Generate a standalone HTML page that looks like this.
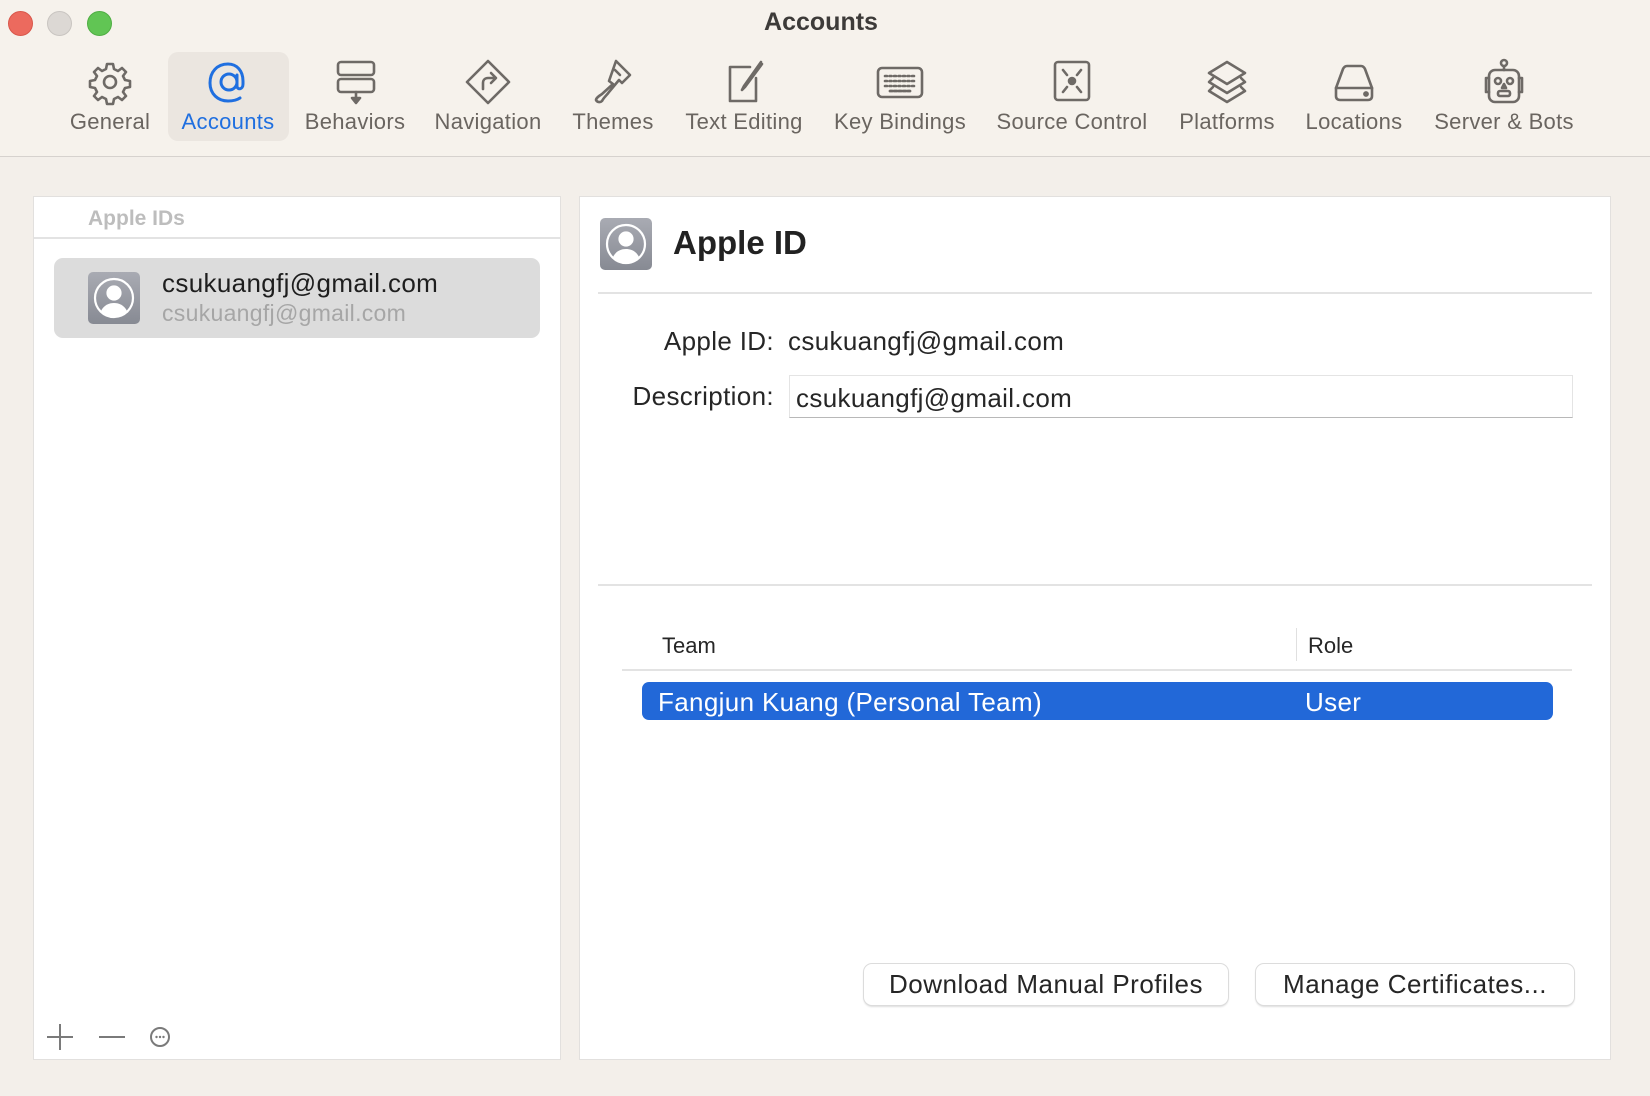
<!DOCTYPE html>
<html><head><meta charset="utf-8"><style>
*{margin:0;padding:0;box-sizing:border-box}
body{width:1650px;height:1096px;background:#f3efea;font-family:"Liberation Sans",sans-serif;position:relative;overflow:hidden;color:#262626}
.a{position:absolute}
.tb{left:0;top:0;width:1650px;height:157px;background:#f6f2ec;border-bottom:1.5px solid #d6d2ce}
.dot{width:25px;height:25px;border-radius:50%;top:11px}
.lab{top:109px;font-size:22px;letter-spacing:0.3px;color:#6a6560;white-space:nowrap;transform:translateX(-50%)}
.ic{top:58px;width:48px;height:48px;transform:translateX(-50%)}
.ic svg{width:48px;height:48px;fill:none;stroke:#6e6a66;stroke-width:2.6;stroke-linecap:round;stroke-linejoin:round}
.panel{background:#fff;border:1.5px solid #e2e0de}
.t25{font-size:26px;letter-spacing:0.35px;white-space:nowrap}
.btn{background:#fff;border-radius:8px;box-shadow:0 0 0 1px #dcdcdc,0 1.5px 2px rgba(0,0,0,.2);font-size:26px;letter-spacing:0.5px;text-align:center;line-height:41px;color:#262626;white-space:nowrap}
</style></head><body>
<div class="a tb"></div>
<div class="a dot" style="left:8px;background:#ec6a5e;border:1px solid #d9574b"></div>
<div class="a dot" style="left:47px;background:#dcd8d4;border:1px solid #c9c5c1"></div>
<div class="a dot" style="left:87px;background:#61c554;border:1px solid #4fae43"></div>
<div class="a" style="left:0;width:1642px;top:8px;text-align:center;font-size:25px;font-weight:bold;color:#3d3b39">Accounts</div>

<div class="a" style="left:168px;top:52px;width:121px;height:89px;background:#ebe6e0;border-radius:10px"></div>

<div class="a ic" style="left:110px"><svg viewBox="0 0 48 48"><path d="M21 6h6l1 5 4 2 4-3 4 4-3 4 2 4 5 1v6l-5 1-2 4 3 4-4 4-4-3-4 2-1 5h-6l-1-5-4-2-4 3-4-4 3-4-2-4-5-1v-6l5-1 2-4-3-4 4-4 4 3 4-2z"/><circle cx="24" cy="24" r="6"/></svg></div>
<div class="a lab" style="left:110px">General</div>

<div class="a ic" style="left:228px"><svg viewBox="0 0 48 48" style="stroke:#1f6fe0;stroke-width:3"><circle cx="25" cy="24" r="8"/><path d="M33 17v11c0 4 6 4 6-2v-3C39 13 33 6 24 6 13 6 6 14 6 25s8 18 18 18c5 0 9-1 12-3"/></svg></div>
<div class="a lab" style="left:228px;color:#1f6fe0">Accounts</div>

<div class="a ic" style="left:355px"><svg viewBox="0 0 48 48"><rect x="7" y="4" width="36" height="13" rx="3"/><rect x="7" y="21" width="36" height="13" rx="3"/><path d="M25 34v8"/><path d="M21 40l4 5 4-5z" fill="#6e6a66"/></svg></div>
<div class="a lab" style="left:355px">Behaviors</div>

<div class="a ic" style="left:488px"><svg viewBox="0 0 48 48"><path d="M24 3l21 21-21 21L3 24z"/><path d="M19 31v-6c0-3 2-5 5-5h7M27 15l5 5-5 5"/></svg></div>
<div class="a lab" style="left:488px">Navigation</div>

<div class="a ic" style="left:613px"><svg viewBox="0 0 48 48"><path d="M27 3l14 14-8 8-3-3-10 12c-2 3-5 5-7 9-2 2-5 1-6-1 0-2 3-4 6-6l11-10-4-3z"/><path d="M31 17l-5-5"/></svg></div>
<div class="a lab" style="left:613px">Themes</div>

<div class="a ic" style="left:744px"><svg viewBox="0 0 48 48"><path d="M30 9H10v34h26V20"/><path d="M41 4L24 28l-2 4 3-3L42 6"/></svg></div>
<div class="a lab" style="left:744px">Text Editing</div>

<div class="a ic" style="left:900px"><svg viewBox="0 0 48 48"><rect x="2" y="10" width="44" height="29" rx="4"/><path d="M9 18h30M9 23h30M9 28h30M14 33h20" stroke-dasharray="2 2.5"/><path d="M14 33h20"/></svg></div>
<div class="a lab" style="left:900px">Key Bindings</div>

<div class="a ic" style="left:1072px"><svg viewBox="0 0 48 48"><rect x="7" y="4" width="34" height="38" rx="3"/><circle cx="24" cy="23" r="3" fill="#6e6a66"/><path d="M15 12l4 5M33 12l-4 5M15 34l4-5M33 34l-4-5"/></svg></div>
<div class="a lab" style="left:1072px">Source Control</div>

<div class="a ic" style="left:1227px"><svg viewBox="0 0 48 48"><path d="M24 4l18 11-18 11L6 15z"/><path d="M10 20l-4 4 18 11 18-11-4-4"/><path d="M10 29l-4 4 18 11 18-11-4-4"/></svg></div>
<div class="a lab" style="left:1227px">Platforms</div>

<div class="a ic" style="left:1354px"><svg viewBox="0 0 48 48"><path d="M6 30L13 11c1-2 2-3 4-3h14c2 0 3 1 4 3l7 19v8c0 3-2 4-4 4H10c-2 0-4-1-4-4z"/><path d="M6 30h36"/><circle cx="36" cy="36" r="1.6" fill="#6e6a66"/></svg></div>
<div class="a lab" style="left:1354px">Locations</div>

<div class="a ic" style="left:1504px"><svg viewBox="0 0 48 48"><circle cx="24" cy="5" r="3"/><path d="M24 8v4"/><rect x="9" y="12" width="30" height="32" rx="6"/><path d="M9 20H6v14h3M39 20h3v14h-3"/><circle cx="18" cy="23" r="3"/><circle cx="30" cy="23" r="3"/><path d="M24 26l-2 4h4z"/><rect x="18" y="33" width="12" height="5" rx="2"/></svg></div>
<div class="a lab" style="left:1504px">Server &amp; Bots</div>

<!-- left panel -->
<div class="a panel" style="left:33px;top:196px;width:528px;height:864px"></div>
<div class="a" style="left:88px;top:207px;font-size:21px;font-weight:bold;color:#bdbdbd">Apple IDs</div>
<div class="a" style="left:34px;top:237px;width:526px;height:1.5px;background:#e3e3e3"></div>
<div class="a" style="left:54px;top:258px;width:486px;height:80px;background:#dcdcdc;border-radius:9px"></div>
<div class="a" style="left:88px;top:272px;width:52px;height:52px;border-radius:5px;background:linear-gradient(#a9abb3,#878a93)">
<svg width="52" height="52" viewBox="0 0 52 52" style="fill:none;stroke:#fff;stroke-width:2.2"><circle cx="26" cy="26" r="19"/><circle cx="26" cy="21" r="6.5" fill="#fff"/><path d="M13 39c3-6 8-8 13-8s10 2 13 8c-3 3-8 6-13 6s-10-3-13-6z" fill="#fff" stroke="none"/></svg></div>
<div class="a t25" style="left:162px;top:268px;color:#1e1e1e">csukuangfj@gmail.com</div>
<div class="a" style="left:162px;top:300px;font-size:23px;letter-spacing:0.3px;color:#a6a6a6">csukuangfj@gmail.com</div>
<svg class="a" style="left:44px;top:1022px" width="140" height="30" viewBox="0 0 140 30"><g stroke="#7a7a7a" stroke-width="2" fill="none"><path d="M16 2v26M3 15h26"/><path d="M55 15h26"/><circle cx="116" cy="15" r="9"/></g><g fill="#7a7a7a"><circle cx="112.5" cy="15" r="1.2"/><circle cx="116" cy="15" r="1.2"/><circle cx="119.5" cy="15" r="1.2"/></g></svg>

<!-- right panel -->
<div class="a panel" style="left:579px;top:196px;width:1032px;height:864px"></div>
<div class="a" style="left:600px;top:218px;width:52px;height:52px;border-radius:5px;background:linear-gradient(#a9abb3,#878a93)">
<svg width="52" height="52" viewBox="0 0 52 52" style="fill:none;stroke:#fff;stroke-width:2.2"><circle cx="26" cy="26" r="19"/><circle cx="26" cy="21" r="6.5" fill="#fff"/><path d="M13 39c3-6 8-8 13-8s10 2 13 8c-3 3-8 6-13 6s-10-3-13-6z" fill="#fff" stroke="none"/></svg></div>
<div class="a" style="left:673px;top:224px;font-size:33px;font-weight:bold;color:#222">Apple ID</div>
<div class="a" style="left:598px;top:292px;width:994px;height:1.5px;background:#e3e3e3"></div>
<div class="a t25" style="left:540px;width:234px;text-align:right;top:326px">Apple ID:</div>
<div class="a t25" style="left:788px;top:326px">csukuangfj@gmail.com</div>
<div class="a t25" style="left:540px;width:234px;text-align:right;top:381px">Description:</div>
<div class="a" style="left:789px;top:375px;width:784px;height:43px;border:1px solid #e4e4e4;border-bottom:1.5px solid #b8b8b8"></div>
<div class="a t25" style="left:796px;top:383px">csukuangfj@gmail.com</div>
<div class="a" style="left:598px;top:584px;width:994px;height:1.5px;background:#e3e3e3"></div>
<div class="a" style="left:662px;top:633px;font-size:22px">Team</div>
<div class="a" style="left:1296px;top:628px;width:1px;height:33px;background:#e0e0e0"></div>
<div class="a" style="left:1308px;top:633px;font-size:22px">Role</div>
<div class="a" style="left:622px;top:669px;width:950px;height:2px;background:#e3e3e3"></div>
<div class="a" style="left:642px;top:682px;width:911px;height:38px;background:#2268d8;border-radius:7px"></div>
<div class="a t25" style="left:658px;top:687px;color:#fff">Fangjun Kuang (Personal Team)</div>
<div class="a t25" style="left:1305px;top:687px;color:#fff">User</div>
<div class="a btn" style="left:864px;top:964px;width:364px;height:41px">Download Manual Profiles</div>
<div class="a btn" style="left:1256px;top:964px;width:318px;height:41px">Manage Certificates...</div>
</body></html>
